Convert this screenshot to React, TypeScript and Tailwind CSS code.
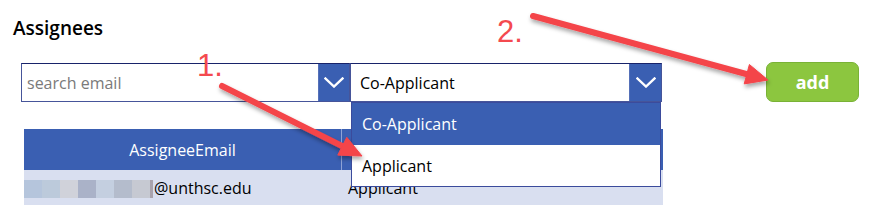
import React from "react";

const font = { fontFamily: '"Open Sans", "Noto Sans", sans-serif' };

function Chevron() {
  return (
    <svg width="20" height="11" viewBox="0 0 20 11" fill="none">
      <path d="M1.5 1.5 L10 9.5 L18.5 1.5" stroke="white" strokeWidth="2.4" strokeLinecap="square" />
    </svg>
  );
}

const blur = ["#b5c5dc", "#bccadb", "#d0d2da", "#aab2c8", "#c4cfe0", "#b4bccc", "#c6c9d2"];

export default function App() {
  return (
    <div className="relative w-[873px] h-[221px] bg-white overflow-hidden text-black" style={font}>
      {/* title */}
      <div className="pl-[13px] pt-[16px] text-[19px] leading-[25px] font-semibold">Assignees</div>

      {/* controls */}
      <div className="flex items-start pl-[21px] mt-[22px]">
        <div className="flex w-[329px] h-[39px] border border-[#46559a] border-t-[#18236a] bg-white">
          <div className="flex-1 flex items-center pl-[5px] text-[16px] text-[#7a7a7a]">search email</div>
          <div className="w-[31px] bg-[#3a5fb2] border-l border-[#5570b8] flex items-center justify-center">
            <Chevron />
          </div>
        </div>
        <div className="relative">
          <div className="flex w-[312px] h-[39px] border border-[#46559a] border-t-[#18236a] bg-white">
            <div className="flex-1 flex items-center pl-[9px] text-[16px]">Co-Applicant</div>
            <div className="w-[32px] bg-[#3a5fb2] border-l border-[#5570b8] flex items-center justify-center">
              <Chevron />
            </div>
          </div>
          {/* open list */}
          <div className="absolute z-10 left-px top-full w-[310px] border border-[#3b4b9c] bg-white">
            <div className="h-[42px] flex items-center pl-[10px] bg-[#3a5fb2] text-white text-[16px]">Co-Applicant</div>
            <div className="h-[41px] flex items-center pl-[10px] text-[16px]">Applicant</div>
          </div>
        </div>
        <button className="ml-[104px] -mt-px w-[93px] h-[40px] rounded-[7px] bg-[#8cc63f] border border-[#79b236] text-white text-[18px] font-bold">
          add
        </button>
      </div>

      {/* table */}
      <div className="ml-[24px] mt-[27px] w-[639px]">
        <div className="flex h-[41px] bg-[#3a5fb2] text-white text-[16px]">
          <div className="w-[318px] flex items-center justify-center border-r border-[#8ea3d6]">AssigneeEmail</div>
          <div className="flex-1 flex items-center pl-[6px]">Role</div>
        </div>
        <div className="flex h-[35px] bg-[#d9dff0] text-[16px]">
          <div className="w-[318px] flex items-center">
            <div className="flex h-[18px] mt-[2px]">
              {blur.map((c, i) => (
                <div key={i} className="w-[18px] h-full" style={{ backgroundColor: c }} />
              ))}
              <div className="w-[3px] h-full bg-[#a9a3ad]" />
            </div>
            <span className="ml-px">@unthsc.edu</span>
          </div>
          <div className="flex-1 flex items-center pl-[6px]">Applicant</div>
        </div>
      </div>

      {/* annotations */}
      <div className="absolute left-[197px] top-[50px] text-[31px] leading-[31px] text-[#f44a4f] z-20" style={{ fontFamily: '"Liberation Sans", Arial, sans-serif' }}>
        1.
      </div>
      <div className="absolute left-[497px] top-[16px] text-[31px] leading-[31px] text-[#f44a4f] z-20" style={{ fontFamily: '"Liberation Sans", Arial, sans-serif' }}>
        2.
      </div>
      <svg className="absolute inset-0 z-20 pointer-events-none" width="873" height="221" viewBox="0 0 873 221">
        <defs>
          <filter id="sh" x="-20%" y="-20%" width="140%" height="140%">
            <feDropShadow dx="1" dy="3" stdDeviation="2" floodColor="#000" floodOpacity="0.35" />
          </filter>
        </defs>
        <g filter="url(#sh)" fill="#f4444a" stroke="#f4444a">
          <line x1="222" y1="86" x2="344" y2="147" strokeWidth="6" strokeLinecap="round" />
          <polygon points="362,156 337.8,155.1 346.8,137.3" strokeWidth="1" strokeLinejoin="round" />
          <line x1="533" y1="16" x2="748" y2="74.5" strokeWidth="6" strokeLinecap="round" />
          <polygon points="768,80 744.2,83.9 749.4,64.5" strokeWidth="1" strokeLinejoin="round" />
        </g>
      </svg>
    </div>
  );
}
